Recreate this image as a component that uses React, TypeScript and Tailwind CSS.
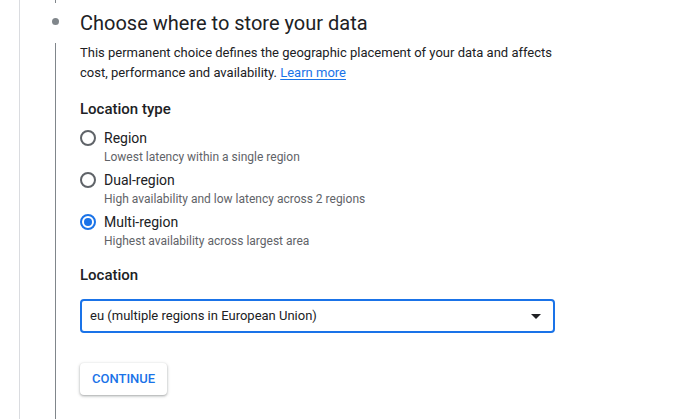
import React from "react";

function Radio({ checked, label, sub }: { checked?: boolean; label: string; sub: string }) {
  return (
    <div className="flex flex-col">
      <div className="flex items-center h-[20px]">
        {checked ? (
          <div className="w-[16px] h-[16px] rounded-full border-2 border-[#1a73e8] flex items-center justify-center">
            <div className="w-[8px] h-[8px] rounded-full bg-[#1a73e8]" />
          </div>
        ) : (
          <div className="w-[16px] h-[16px] rounded-full border-2 border-[#5f6368]" />
        )}
        <span className="ml-[8px] text-[14px] leading-[20px] text-[#202124]">{label}</span>
      </div>
      <div className="pl-[24px] text-[12px] leading-[18px] text-[#5f6368]">{sub}</div>
    </div>
  );
}

export default function App() {
  return (
    <div
      className="w-[695px] h-[419px] bg-white overflow-hidden flex pl-[19px]"
      style={{ fontFamily: "Roboto, 'Liberation Sans', sans-serif" }}
    >
      <div className="flex-1 flex border-l border-[#dadce0]">
        <div className="w-[60px] flex flex-col items-start pl-[32px]">
          <div className="ml-[3px] w-px h-[3px] bg-[#80868b]" />
          <div className="mt-[15px] w-[7px] h-[7px] rounded-full bg-[#80868b]" />
          <div className="ml-[3px] mt-[18px] w-px flex-1 bg-[#80868b]" />
        </div>
        <div className="flex flex-col pt-[9px]">
          <h1 className="text-[20px] leading-[28px] text-[#202124] font-normal">
            Choose where to store your data
          </h1>
          <p className="mt-[6px] w-[480px] text-[13px] leading-[20px] text-[#202124]">
            This permanent choice defines the geographic placement of your data and affects cost,
            performance and availability.{" "}
            <span className="text-[#1a73e8] underline underline-offset-2">Learn more</span>
          </p>
          <h2 className="mt-[16px] text-[15px] leading-[20px] font-medium text-[#202124]">
            Location type
          </h2>
          <div className="mt-[9px] flex flex-col gap-[4px]">
            <Radio label="Region" sub="Lowest latency within a single region" />
            <Radio label="Dual-region" sub="High availability and low latency across 2 regions" />
            <Radio checked label="Multi-region" sub="Highest availability across largest area" />
          </div>
          <h2 className="mt-[15px] text-[15px] leading-[20px] font-medium text-[#202124]">
            Location
          </h2>
          <div className="mt-[14px] w-[475px] h-[34px] border-2 border-[#1a73e8] rounded-[4px] flex items-center justify-between pl-[8px] pr-[12px]">
            <span className="text-[13px] text-[#202124]">eu (multiple regions in European Union)</span>
            <svg width="10" height="5" viewBox="0 0 10 5">
              <path d="M0 0 L10 0 L5 5 Z" fill="#202124" />
            </svg>
          </div>
          <div className="mt-[30px]">
            <button className="h-[32px] px-[12px] rounded-[4px] bg-white text-[13px] font-medium text-[#1a73e8] shadow-[0_1px_2px_rgba(60,64,67,0.3),0_1px_3px_1px_rgba(60,64,67,0.15)]">
              CONTINUE
            </button>
          </div>
        </div>
      </div>
    </div>
  );
}
